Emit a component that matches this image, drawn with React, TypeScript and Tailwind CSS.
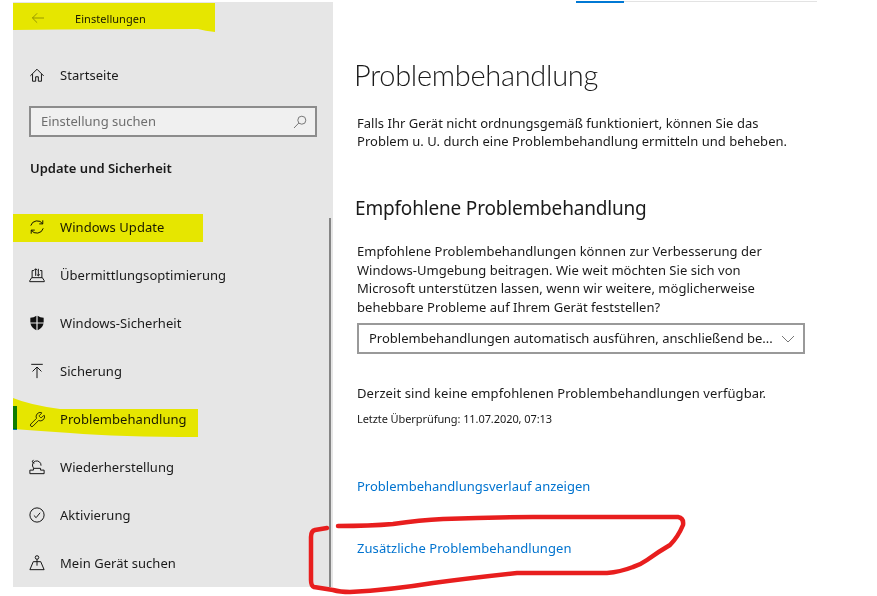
import React from "react"
import { Wrench } from "lucide-react"

const font = "font-['Noto_Sans','Open_Sans',sans-serif]"

const icons: Record<string, React.ReactNode> = {
    home: <path d="M1.5 10 L9 2.5 L16.5 10 M4 8 V16 H7.5 V11 H10.5 V16 H14 V8" />,
    update: (
        <>
            <path d="M2 7.5 A7.5 7.5 0 0 1 15.5 5.5 M15.5 1.5 V5.5 H11.5" />
            <path d="M16 10.5 A7.5 7.5 0 0 1 2.5 12.5 M2.5 16.5 V12.5 H6.5" />
        </>
    ),
    delivery: (
        <>
            <path d="M3.5 12 V4 H5.5 M12.5 4 H14.5 V12 M0.8 16.5 H17.2 V15.5 L15 12 H3 L0.8 15.5 Z" />
            <path d="M7.5 10 V2 M5.8 3.7 L7.5 2 L9.2 3.7 M10.5 2 V10 M8.8 8.3 L10.5 10 L12.2 8.3" />
        </>
    ),
    backup: <path d="M2.5 1.5 H15.5 M9 17 V4.5 M4 9.5 L9 4.5 L14 9.5" />,
    recovery: (
        <>
            <path d="M1 16.5 V12.5 H5 V10.5 H13 V12.5 H17 V16.5 Z" />
            <path d="M5 10 A4.8 4.8 0 1 1 13.5 7.5 M5 1 L3.5 3.2 L6 4.8" />
        </>
    ),
    check: (
        <>
            <circle cx="9" cy="9" r="8" />
            <path d="M5.5 9.5 L8 12 L12.5 6.5" />
        </>
    ),
    find: (
        <>
            <circle cx="9" cy="2.8" r="2" />
            <path d="M9 4.8 V12 M9 7.5 H4.8 L1 16.5 H17 L13.2 7.5 H9" />
        </>
    ),
}

const Icon = ({ name }: { name: string }) => {
    if (name === "shield") {
        return (
            <svg width="16" height="16" viewBox="0 0 18 18" fill="#111">
                <path d="M1.5 3 Q5.5 3 8.3 0.8 V8.3 H1.5 Z M9.7 0.8 Q12.5 3 16.5 3 V8.3 H9.7 Z M1.6 9.7 H8.3 V17.2 Q3 15 1.6 9.7 Z M9.7 9.7 H16.4 Q15 15 9.7 17.2 Z" />
            </svg>
        )
    }
    if (name === "wrench") {
        return <Wrench size={17} strokeWidth={1.2} color="#111" className="scale-x-[-1] rotate-90" />
    }
    return (
        <svg width="16" height="16" viewBox="0 0 18 18" fill="none" stroke="#111" strokeWidth="1.1">
            {icons[name]}
        </svg>
    )
}

const NavRow = ({ icon, label }: { icon: string; label: string }) => (
    <div className="flex items-center h-12 pl-[16px]">
        <span className="w-[31px] flex shrink-0">
            <Icon name={icon} />
        </span>
        <span className="pt-[2px] text-[13px] tracking-[0.05px] text-[#1a1a1a]">{label}</span>
    </div>
)

const navItems = [
    { icon: "update", label: "Windows Update" },
    { icon: "delivery", label: "Übermittlungsoptimierung" },
    { icon: "shield", label: "Windows-Sicherheit" },
    { icon: "backup", label: "Sicherung" },
    { icon: "wrench", label: "Problembehandlung" },
    { icon: "recovery", label: "Wiederherstellung" },
    { icon: "check", label: "Aktivierung" },
    { icon: "find", label: "Mein Gerät suchen" },
]

const App = () => {
    return (
        <div className={`relative w-[877px] h-[596px] bg-white overflow-hidden flex items-start pt-[2px] pl-[13px] ${font}`}>
            {/* sidebar */}
            <div className="relative w-[320px] h-[585px] shrink-0 bg-[#e6e6e6] flex flex-col">
                <div className="flex items-center h-[32px] pl-[18px]">
                    <svg width="14" height="12" viewBox="0 0 16 14" fill="none" stroke="#8a8a3a" strokeWidth="1" className="mr-[30px]">
                        <path d="M15 7 H1.5 M7 1.5 L1.5 7 L7 12.5" />
                    </svg>
                    <span className="pt-[2px] text-[11px] tracking-[0.05px] text-[#1a1a1a]">Einstellungen</span>
                </div>
                <div className="mt-[17px]">
                    <NavRow icon="home" label="Startseite" />
                </div>
                <div className="mt-[7px] mx-[16px] h-[31px] border-2 border-[#8c8c8c] bg-[#f0f0f0] flex items-center justify-between pl-[10px] pr-[8px]">
                    <span className="text-[13px] text-[#6e6e6e]">Einstellung suchen</span>
                    <svg width="14" height="14" viewBox="0 0 14 14" fill="none" stroke="#777" strokeWidth="1">
                        <circle cx="8.8" cy="5.2" r="4" />
                        <path d="M5.8 8 L1 13" />
                    </svg>
                </div>
                <div className="mt-[21px] mb-[25px] mx-[17px] h-5 flex items-center pt-[2px] text-[13px] font-semibold text-[#1a1a1a]">
                    Update und Sicherheit
                </div>
                {navItems.map((item) => (
                    <NavRow key={item.label} icon={item.icon} label={item.label} />
                ))}
                {/* selected marker and scrollbar */}
                <div className="absolute left-0 top-[404px] w-1 h-[24px] bg-[#107c10] border-b-2 border-[#0078d4]" />
                <div className="absolute left-[316px] top-[216px] bottom-0 w-[2px] bg-[#858585]" />
            </div>

            {/* content */}
            <div className="relative flex-1 pl-[22px] pt-[53px] text-[#1a1a1a]">
                <div className="absolute left-[243px] top-[-1px] w-[241px] h-[1px] bg-[#e3e3e3]">
                    <div className="w-[48px] h-[2px] bg-[#0078d4]" />
                </div>
                <h1 className="-ml-[1px] text-[29px] font-light leading-[40px] font-['Lato',sans-serif] tracking-[-0.3px]">Problembehandlung</h1>
                <p className="mt-[19px] ml-[2px] text-[13px] leading-[18px] tracking-[0.03px]">
                    Falls Ihr Gerät nicht ordnungsgemäß funktioniert, können Sie das
                    <br />
                    Problem u. U. durch eine Problembehandlung ermitteln und beheben.
                </p>
                <h2 className="mt-[44px] text-[19px] leading-[28px] tracking-[-0.18px]">Empfohlene Problembehandlung</h2>
                <p className="mt-[20px] ml-[2px] text-[13px] leading-[18.5px] tracking-[0.03px]">
                    Empfohlene Problembehandlungen können zur Verbesserung der
                    <br />
                    Windows-Umgebung beitragen. Wie weit möchten Sie sich von
                    <br />
                    Microsoft unterstützen lassen, wenn wir weitere, möglicherweise
                    <br />
                    behebbare Probleme auf Ihrem Gerät feststellen?
                </p>
                <div className="mt-[7px] ml-[2px] w-[448px] h-[31px] border-2 border-[#999] flex items-center justify-between pl-[10px] pr-[8px]">
                    <span className="text-[13px]">Problembehandlungen automatisch ausführen, anschließend be...</span>
                    <svg width="14" height="8" viewBox="0 0 14 8" fill="none" stroke="#777" strokeWidth="1">
                        <path d="M1 1 L7 7 L13 1" />
                    </svg>
                </div>
                <p className="mt-[29px] ml-[2px] text-[13px] leading-[20px] tracking-[0.08px]">Derzeit sind keine empfohlenen Problembehandlungen verfügbar.</p>
                <p className="mt-[7px] ml-[2px] text-[11px] leading-[18px] tracking-[-0.08px]">Letzte Überprüfung: 11.07.2020, 07:13</p>
                <a className="block mt-[48px] ml-[2px] text-[13px] leading-[20px] text-[#0073cf]">Problembehandlungsverlauf anzeigen</a>
                <a className="block mt-[42px] ml-[2px] text-[13px] leading-[20px] tracking-[0.06px] text-[#0073cf]">Zusätzliche Problembehandlungen</a>
            </div>

            {/* marker pen annotations drawn over the screenshot */}
            <svg width="877" height="596" viewBox="0 0 877 596" fill="none" className="absolute left-0 top-0 pointer-events-none">
                <g className="mix-blend-multiply" fill="#ffff00">
                    <path d="M13 3 L215 3 L215 32 Q205 31 198 29 Q100 29 13 30 Z" />
                    <path d="M13 214 H203 V242 H13 Z" />
                    <path d="M13 398 Q30 405 60 409 L198 409 V437 Q120 437 70 433 Q40 431 13 429 Z" />
                </g>
                <path
                    d="M338 526 Q370 526 393 524 Q420 520 443 519 Q490 517 533 517 L678 517 Q684 518 683 525 Q678 537 670 545 Q658 552 647 560 Q640 565 633 567 Q620 572 607 573 L517 573 Q470 578 433 583 Q390 590 350 592 Q340 592 333 590 L314 587 Q311 586 311 580 L311 537 Q311 531 315 530 L327 528"
                    stroke="#e81e1e"
                    strokeWidth="4.5"
                    strokeLinecap="round"
                    strokeLinejoin="round"
                />
            </svg>
        </div>
    )
}

export default App
